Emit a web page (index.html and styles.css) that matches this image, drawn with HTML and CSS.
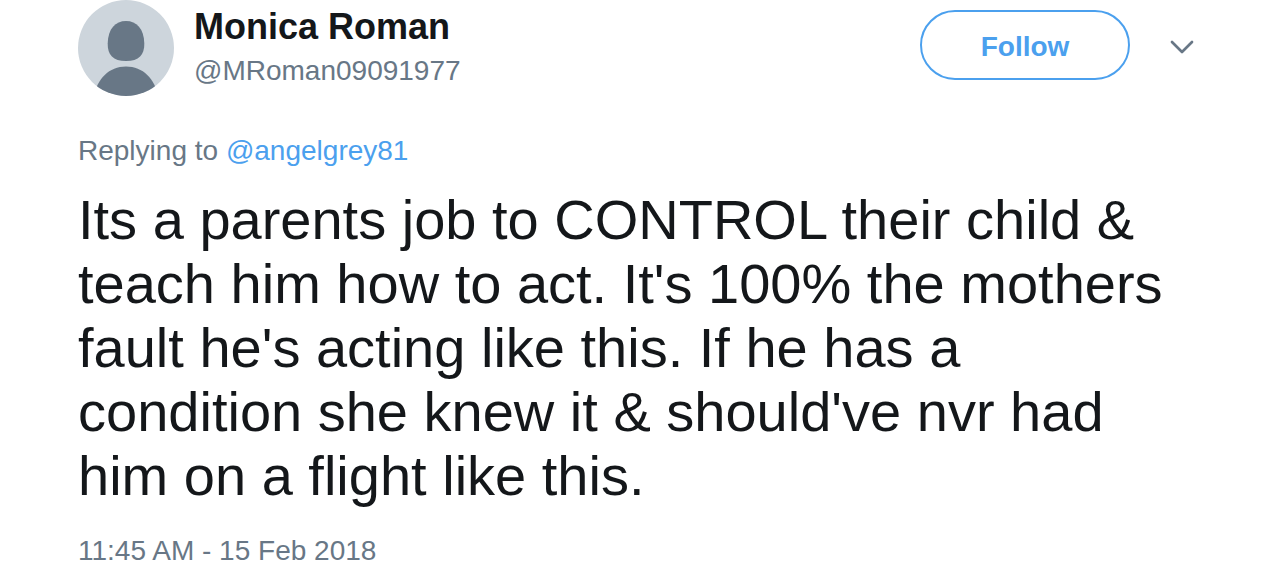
FILE: index.html
```html
<!DOCTYPE html>
<html lang="en">
<head>
    <meta charset="UTF-8">
    <meta name="viewport" content="width=device-width, initial-scale=1.0">
    <title>Monica Roman</title>
    <link rel="stylesheet" href="styles.css">
</head>
<body>
    <article class="tweet">
        <header class="tweet-header">
            <a class="account" href="#">
                <svg class="avatar" viewBox="0 0 96 96" aria-hidden="true">
                    <defs>
                        <clipPath id="avatar-clip"><circle cx="48" cy="48" r="48"/></clipPath>
                    </defs>
                    <g clip-path="url(#avatar-clip)">
                        <rect width="96" height="96" fill="#cdd5dc"/>
                        <path fill="#687786" d="M48 21c10.500 0 18 7.500 18.300 22.500C66.500 55 61 61 48 61s-18.500-6-18.300-17.500C30 28.500 37.500 21 48 21z"/>
                        <path fill="#687786" d="M16 96c3-17 15-29.500 32-29.500S77 79 80 96z"/>
                    </g>
                </svg>
                <span class="names">
                    <strong class="fullname">Monica Roman</strong>
                    <span class="username">@MRoman09091977</span>
                </span>
            </a>
            <div class="actions">
                <button class="follow-button" type="button">Follow</button>
                <button class="more-button" type="button" aria-label="More">
                    <svg class="caret" viewBox="0 0 24 14" aria-hidden="true">
                        <path d="M2 2l10 10L22 2" fill="none" stroke="#687786" stroke-width="2.700" stroke-linecap="round" stroke-linejoin="round"/>
                    </svg>
                </button>
            </div>
        </header>
        <p class="reply-context">Replying to <a href="#">@angelgrey81</a></p>
        <p class="tweet-text">Its a parents job to CONTROL their child &amp; teach him how to act. It's 100% the mothers fault he's acting like this. If he has a condition she knew it &amp; should've nvr had him on a flight like this.</p>
        <time class="timestamp" datetime="2018-02-15T11:45">11:45 AM - 15 Feb 2018</time>
    </article>
</body>
</html>
```

FILE: styles.css
```css
body {
    margin: 0;
    background-color: #fff;
    font-family: "Helvetica Neue", "Liberation Sans", Arial, sans-serif;
    color: #14171a;
}

a {
    color: #4ba0ee;
    text-decoration: none;
}

.tweet {
    padding: 0 78px;
}

.tweet-header {
    display: flex;
    justify-content: space-between;
    align-items: flex-start;
}

.account {
    display: flex;
    gap: 20px;
}

.avatar {
    width: 96px;
    height: 96px;
}

.names {
    display: flex;
    flex-direction: column;
    padding-top: 5px;
}

.fullname {
    font-size: 36px;
    line-height: 44px;
    color: #14171a;
}

.username {
    font-size: 28px;
    line-height: 44px;
    color: #687786;
}

.actions {
    display: flex;
    align-items: center;
    gap: 38px;
    padding-top: 10px;
}

.follow-button {
    box-sizing: border-box;
    width: 210px;
    height: 70px;
    padding: 4px 0 0;
    border: 2px solid #4ba0ee;
    border-radius: 35px;
    background: none;
    color: #4ba0ee;
    font-family: inherit;
    font-size: 28px;
    font-weight: bold;
    cursor: pointer;
}

.more-button {
    display: flex;
    padding: 8px 2px 4px;
    border: none;
    background: none;
    cursor: pointer;
}

.caret {
    width: 24px;
    height: 14px;
}

.reply-context {
    margin: 37px 0 19px;
    font-size: 28px;
    line-height: 36px;
    color: #687786;
}

.tweet-text {
    margin: 0 0 25px;
    padding-right: 20px;
    font-size: 56px;
    line-height: 64px;
}

.timestamp {
    font-size: 28px;
    line-height: 36px;
    color: #687786;
}
```
